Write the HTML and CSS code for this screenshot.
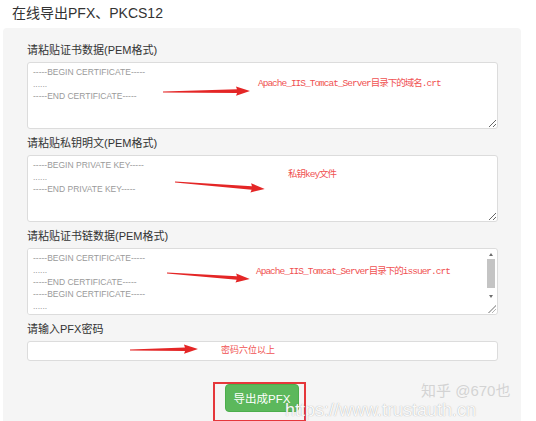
FILE: index.html
```html
<!DOCTYPE html>
<html lang="zh-CN">
<head>
<meta charset="utf-8">
<title>在线导出PFX、PKCS12</title>
<link rel="stylesheet" href="styles.css">
</head>
<body>
<h1 class="title">在线导出PFX、PKCS12</h1>
<div class="panel">
  <div class="field">
    <label class="lbl">请粘贴证书数据(PEM格式)</label>
    <textarea class="ta" placeholder="-----BEGIN CERTIFICATE-----&#10;......&#10;-----END CERTIFICATE-----"></textarea>
  </div>
  <div class="field">
    <label class="lbl">请粘贴私钥明文(PEM格式)</label>
    <textarea class="ta" placeholder="-----BEGIN PRIVATE KEY-----&#10;......&#10;-----END PRIVATE KEY-----"></textarea>
  </div>
  <div class="field">
    <label class="lbl">请粘贴证书链数据(PEM格式)</label>
    <div class="ta-wrap">
      <textarea class="ta ta-inner" placeholder="-----BEGIN CERTIFICATE-----&#10;......&#10;-----END CERTIFICATE-----&#10;-----BEGIN CERTIFICATE-----&#10;......&#10;-----END CERTIFICATE-----"></textarea>
      <div class="sb">
        <span class="sb-up"></span>
        <span class="sb-thumb"></span>
        <span class="sb-gap"></span>
        <span class="sb-down"></span>
        <span class="sb-grip"></span>
      </div>
    </div>
  </div>
  <div class="field">
    <label class="lbl">请输入PFX密码</label>
    <input class="inp" type="password">
  </div>
  <div class="actions">
    <div class="hl"><button class="btn">导出成PFX</button></div>
  </div>
</div>

<div class="overlay">
  <svg class="arrows" width="536" height="421" viewBox="0 0 536 421">
    <g fill="#e42626">
      <g transform="translate(163 92) rotate(-0.66)"><polygon points="0,-0.5 74,-1.8 73,-4.6 87,0 73,4.6 74,1.8 0,0.5"/></g>
      <g transform="translate(175 182) rotate(4.45)"><polygon points="0,-0.5 77,-1.8 76,-4.6 90,0 76,4.6 77,1.8 0,0.5"/></g>
      <g transform="translate(167 273) rotate(4.13)"><polygon points="0,-0.5 70,-1.8 69,-4.6 83,0 69,4.6 70,1.8 0,0.5"/></g>
      <g transform="translate(130 350) rotate(-0.84)"><polygon points="0,-0.5 55,-1.8 54,-4.6 68,0 54,4.6 55,1.8 0,0.5"/></g>
    </g>
  </svg>
  <span class="note note-1">Apache_IIS_Tomcat_Server目录下的域名.crt</span>
  <span class="note note-2">私钥key文件</span>
  <span class="note note-3">Apache_IIS_Tomcat_Server目录下的issuer.crt</span>
  <span class="note note-4">密码六位以上</span>
  <span class="wm wm-zh">知乎 @670也</span>
  <span class="wm wm-url">https://www.trustauth.cn</span>
</div>
</body>
</html>
```

FILE: styles.css
```css
* { box-sizing: border-box; }

html, body {
  margin: 0;
  padding: 0;
  background: #ffffff;
  width: 536px;
  height: 421px;
  overflow: hidden;
}

body {
  font-family: "Liberation Sans", "Noto Sans CJK SC", sans-serif;
  color: #333333;
  position: relative;
}

.title {
  margin: 0;
  padding: 4px 0 0 12px;
  height: 28px;
  font-size: 14px;
  line-height: 18px;
  font-weight: normal;
  color: #333333;
}

.panel {
  margin-left: 3px;
  width: 518px;
  background: #f5f5f5;
  border-radius: 4px 4px 0 0;
  padding: 15px 23px 30px 24px;
  display: flex;
  flex-direction: column;
  gap: 7px;
}

.field {
  display: flex;
  flex-direction: column;
}

.lbl {
  font-size: 11px;
  line-height: 14px;
  margin-bottom: 5px;
  color: #333333;
}

.ta {
  width: 471px;
  height: 67px;
  border: 1px solid #dcdcdc;
  border-radius: 3px;
  background: #ffffff;
  padding: 3px 5px;
  font-family: "Liberation Sans", "Noto Sans CJK SC", sans-serif;
  font-size: 8.5px;
  line-height: 12px;
  color: #999999;
  resize: vertical;
  margin: 0;
  display: block;
  outline: none;
}

.ta::placeholder {
  color: #9a9a9a;
}

.ta-wrap {
  width: 471px;
  height: 67px;
  border: 1px solid #dcdcdc;
  border-radius: 3px;
  background: #ffffff;
  display: flex;
  overflow: hidden;
}

.ta-inner {
  flex: 1;
  width: auto;
  height: 100%;
  border: none;
  border-radius: 0;
  resize: none;
  overflow: hidden;
}

.sb {
  width: 10px;
  display: flex;
  flex-direction: column;
  align-items: center;
  background: #ffffff;
  margin-right: 1px;
}

.sb-up {
  width: 0;
  height: 0;
  margin-top: 4px;
  border-left: 2.5px solid transparent;
  border-right: 2.5px solid transparent;
  border-bottom: 3px solid #6e6e6e;
}

.sb-thumb {
  margin-top: 3px;
  width: 8px;
  height: 29px;
  background: #c4c4c4;
}

.sb-gap {
  flex: 1;
}

.sb-down {
  width: 0;
  height: 0;
  border-left: 2.5px solid transparent;
  border-right: 2.5px solid transparent;
  border-top: 3px solid #6e6e6e;
  margin-bottom: 6px;
}

.sb-grip {
  width: 9px;
  height: 9px;
  margin-bottom: 1px;
  background:
    linear-gradient(135deg, transparent 55%, #b5b5b5 55%, #b5b5b5 62%, transparent 62%, transparent 75%, #b5b5b5 75%, #b5b5b5 82%, transparent 82%);
}

.inp {
  width: 471px;
  height: 20px;
  border: 1px solid #dcdcdc;
  border-radius: 3px;
  background: #ffffff;
  margin: 0;
  padding: 0 5px;
  outline: none;
}

.actions {
  display: flex;
  justify-content: center;
  margin-top: 14px;
}

.hl {
  display: flex;
  border: 2px solid #e5373b;
  padding: 0 5px 8px 10px;
  margin-right: 6px;
}

.btn {
  width: 74px;
  height: 28px;
  background: #5cb85c;
  border: 1px solid #4cae4c;
  border-radius: 4px;
  color: #ffffff;
  font-family: "Liberation Sans", "Noto Sans CJK SC", sans-serif;
  font-size: 11.5px;
  padding: 0;
  cursor: pointer;
}

.overlay {
  position: absolute;
  left: 0;
  top: 0;
  width: 536px;
  height: 421px;
  pointer-events: none;
}

.arrows {
  position: absolute;
  left: 0;
  top: 0;
}

.note {
  position: absolute;
  font-family: "Liberation Mono", "Noto Sans CJK SC", monospace;
  font-size: 9.5px;
  letter-spacing: -1px;
  line-height: 12px;
  color: #f05252;
  white-space: nowrap;
}

.note-1 { left: 258px; top: 78px; }
.note-2 { left: 288px; top: 169px; }
.note-3 { left: 256px; top: 266px; }
.note-4 { left: 221px; top: 345px; letter-spacing: 0; font-size: 9px; }

.wm {
  position: absolute;
  white-space: nowrap;
  font-family: "Liberation Sans", "Noto Sans CJK SC", sans-serif;
}

.wm-zh {
  left: 421px;
  top: 385px;
  font-size: 15px;
  line-height: 12px;
  color: rgba(205, 205, 205, 0.85);
}

.wm-url {
  left: 285px;
  top: 402px;
  font-size: 18px;
  line-height: 16px;
  color: rgba(255, 255, 255, 0.95);
  text-shadow: 0 0 1px rgba(120, 120, 120, 0.7);
}
```
